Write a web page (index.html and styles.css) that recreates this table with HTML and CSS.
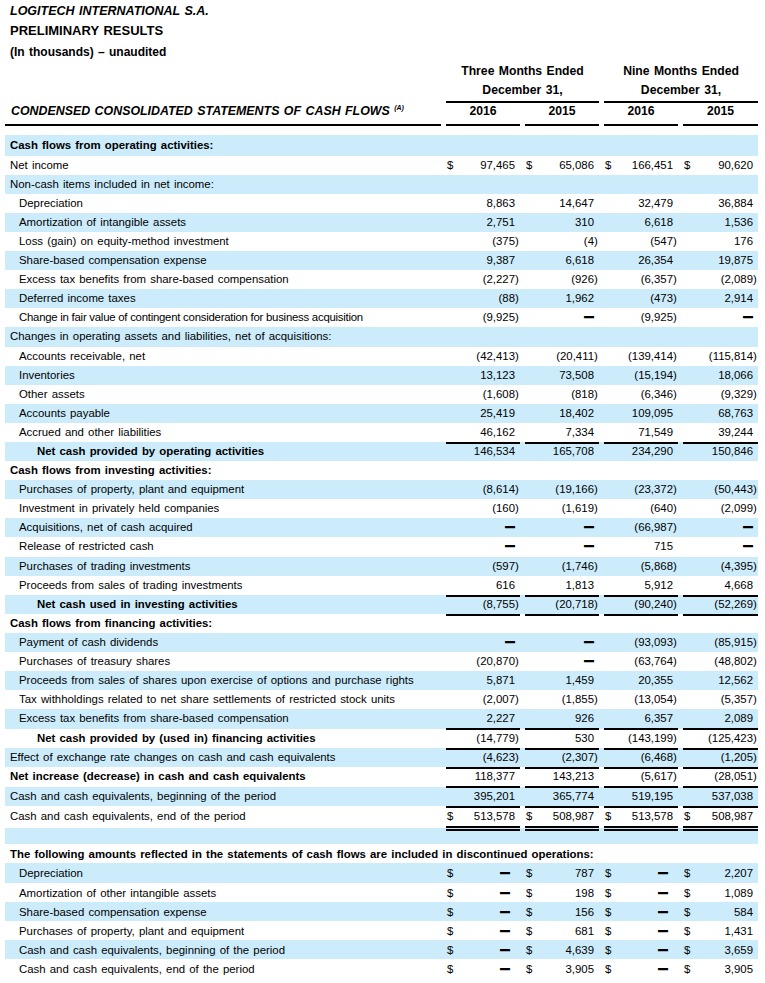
FILE: index.html
```html
<!DOCTYPE html>
<html lang="en">
<head>
<meta charset="utf-8">
<title>Logitech – Condensed Consolidated Statements of Cash Flows</title>
<link rel="stylesheet" href="styles.css">
</head>
<body>
<div class="page">
  <div class="titles">
    <div class="t1">LOGITECH INTERNATIONAL S.A.</div>
    <div class="t2">PRELIMINARY RESULTS</div>
    <div class="t3">(In thousands) – unaudited</div>
  </div>

  <div class="grid hA">
    <div></div>
    <div class="span2">Three Months Ended</div>
    <div class="span2">Nine Months Ended</div>
  </div>
  <div class="grid hB">
    <div></div>
    <div class="span2 u">December 31,</div>
    <div class="span2 u">December 31,</div>
  </div>
  <div class="grid hC">
    <div class="stitle u">CONDENSED CONSOLIDATED STATEMENTS OF CASH FLOWS <sup>(A)</sup></div>
    <div class="yr u">2016</div>
    <div class="yr u">2015</div>
    <div class="yr u">2016</div>
    <div class="yr u">2015</div>
  </div>

  <div class="tbl">
    <div class="grid r first"><div class="l b">Cash flows from operating activities:</div><div></div><div></div><div></div><div></div></div>
    <div class="grid r"><div class="l">Net income</div><div class="c"><span class="d">$</span>97,465</div><div class="c"><span class="d">$</span>65,086</div><div class="c"><span class="d">$</span>166,451</div><div class="c"><span class="d">$</span>90,620</div></div>
    <div class="grid r"><div class="l">Non-cash items included in net income:</div><div></div><div></div><div></div><div></div></div>
    <div class="grid r"><div class="l i1">Depreciation</div><div class="c">8,863</div><div class="c">14,647</div><div class="c">32,479</div><div class="c">36,884</div></div>
    <div class="grid r"><div class="l i1">Amortization of intangible assets</div><div class="c">2,751</div><div class="c">310</div><div class="c">6,618</div><div class="c">1,536</div></div>
    <div class="grid r"><div class="l i1">Loss (gain) on equity-method investment</div><div class="c">(375<span class="p">)</span></div><div class="c">(4<span class="p">)</span></div><div class="c">(547<span class="p">)</span></div><div class="c">176</div></div>
    <div class="grid r"><div class="l i1">Share-based compensation expense</div><div class="c">9,387</div><div class="c">6,618</div><div class="c">26,354</div><div class="c">19,875</div></div>
    <div class="grid r"><div class="l i1">Excess tax benefits from share-based compensation</div><div class="c">(2,227<span class="p">)</span></div><div class="c">(926<span class="p">)</span></div><div class="c">(6,357<span class="p">)</span></div><div class="c">(2,089<span class="p">)</span></div></div>
    <div class="grid r"><div class="l i1">Deferred income taxes</div><div class="c">(88<span class="p">)</span></div><div class="c">1,962</div><div class="c">(473<span class="p">)</span></div><div class="c">2,914</div></div>
    <div class="grid r"><div class="l i1 cond">Change in fair value of contingent consideration for business acquisition</div><div class="c">(9,925<span class="p">)</span></div><div class="c"><span class="z">—</span></div><div class="c">(9,925<span class="p">)</span></div><div class="c"><span class="z">—</span></div></div>
    <div class="grid r"><div class="l">Changes in operating assets and liabilities, net of acquisitions:</div><div></div><div></div><div></div><div></div></div>
    <div class="grid r"><div class="l i1">Accounts receivable, net</div><div class="c">(42,413<span class="p">)</span></div><div class="c">(20,411<span class="p">)</span></div><div class="c">(139,414<span class="p">)</span></div><div class="c">(115,814<span class="p">)</span></div></div>
    <div class="grid r"><div class="l i1">Inventories</div><div class="c">13,123</div><div class="c">73,508</div><div class="c">(15,194<span class="p">)</span></div><div class="c">18,066</div></div>
    <div class="grid r"><div class="l i1">Other assets</div><div class="c">(1,608<span class="p">)</span></div><div class="c">(818<span class="p">)</span></div><div class="c">(6,346<span class="p">)</span></div><div class="c">(9,329<span class="p">)</span></div></div>
    <div class="grid r"><div class="l i1">Accounts payable</div><div class="c">25,419</div><div class="c">18,402</div><div class="c">109,095</div><div class="c">68,763</div></div>
    <div class="grid r"><div class="l i1">Accrued and other liabilities</div><div class="c u">46,162</div><div class="c u">7,334</div><div class="c u">71,549</div><div class="c u">39,244</div></div>
    <div class="grid r"><div class="l i2 b">Net cash provided by operating activities</div><div class="c">146,534</div><div class="c">165,708</div><div class="c">234,290</div><div class="c">150,846</div></div>
    <div class="grid r"><div class="l b">Cash flows from investing activities:</div><div></div><div></div><div></div><div></div></div>
    <div class="grid r"><div class="l i1">Purchases of property, plant and equipment</div><div class="c">(8,614<span class="p">)</span></div><div class="c">(19,166<span class="p">)</span></div><div class="c">(23,372<span class="p">)</span></div><div class="c">(50,443<span class="p">)</span></div></div>
    <div class="grid r"><div class="l i1">Investment in privately held companies</div><div class="c">(160<span class="p">)</span></div><div class="c">(1,619<span class="p">)</span></div><div class="c">(640<span class="p">)</span></div><div class="c">(2,099<span class="p">)</span></div></div>
    <div class="grid r"><div class="l i1">Acquisitions, net of cash acquired</div><div class="c"><span class="z">—</span></div><div class="c"><span class="z">—</span></div><div class="c">(66,987<span class="p">)</span></div><div class="c"><span class="z">—</span></div></div>
    <div class="grid r"><div class="l i1">Release of restricted cash</div><div class="c"><span class="z">—</span></div><div class="c"><span class="z">—</span></div><div class="c">715</div><div class="c"><span class="z">—</span></div></div>
    <div class="grid r"><div class="l i1">Purchases of trading investments</div><div class="c">(597<span class="p">)</span></div><div class="c">(1,746<span class="p">)</span></div><div class="c">(5,868<span class="p">)</span></div><div class="c">(4,395<span class="p">)</span></div></div>
    <div class="grid r"><div class="l i1">Proceeds from sales of trading investments</div><div class="c u">616</div><div class="c u">1,813</div><div class="c u">5,912</div><div class="c u">4,668</div></div>
    <div class="grid r"><div class="l i2 b">Net cash used in investing activities</div><div class="c u">(8,755<span class="p">)</span></div><div class="c u">(20,718<span class="p">)</span></div><div class="c u">(90,240<span class="p">)</span></div><div class="c u">(52,269<span class="p">)</span></div></div>
    <div class="grid r"><div class="l b">Cash flows from financing activities:</div><div></div><div></div><div></div><div></div></div>
    <div class="grid r"><div class="l i1">Payment of cash dividends</div><div class="c"><span class="z">—</span></div><div class="c"><span class="z">—</span></div><div class="c">(93,093<span class="p">)</span></div><div class="c">(85,915<span class="p">)</span></div></div>
    <div class="grid r"><div class="l i1">Purchases of treasury shares</div><div class="c">(20,870<span class="p">)</span></div><div class="c"><span class="z">—</span></div><div class="c">(63,764<span class="p">)</span></div><div class="c">(48,802<span class="p">)</span></div></div>
    <div class="grid r"><div class="l i1">Proceeds from sales of shares upon exercise of options and purchase rights</div><div class="c">5,871</div><div class="c">1,459</div><div class="c">20,355</div><div class="c">12,562</div></div>
    <div class="grid r"><div class="l i1">Tax withholdings related to net share settlements of restricted stock units</div><div class="c">(2,007<span class="p">)</span></div><div class="c">(1,855<span class="p">)</span></div><div class="c">(13,054<span class="p">)</span></div><div class="c">(5,357<span class="p">)</span></div></div>
    <div class="grid r t"><div class="l i1">Excess tax benefits from share-based compensation</div><div class="c u">2,227</div><div class="c u">926</div><div class="c u">6,357</div><div class="c u">2,089</div></div>
    <div class="grid r t"><div class="l i2 b">Net cash provided by (used in) financing activities</div><div class="c u">(14,779<span class="p">)</span></div><div class="c u">530</div><div class="c u">(143,199<span class="p">)</span></div><div class="c u">(125,423<span class="p">)</span></div></div>
    <div class="grid r t"><div class="l">Effect of exchange rate changes on cash and cash equivalents</div><div class="c u">(4,623<span class="p">)</span></div><div class="c u">(2,307<span class="p">)</span></div><div class="c u">(6,468<span class="p">)</span></div><div class="c u">(1,205<span class="p">)</span></div></div>
    <div class="grid r t"><div class="l b">Net increase (decrease) in cash and cash equivalents</div><div class="c u">118,377</div><div class="c u">143,213</div><div class="c u">(5,617<span class="p">)</span></div><div class="c u">(28,051<span class="p">)</span></div></div>
    <div class="grid r t"><div class="l">Cash and cash equivalents, beginning of the period</div><div class="c u">395,201</div><div class="c u">365,774</div><div class="c u">519,195</div><div class="c u">537,038</div></div>
    <div class="grid r end"><div class="l">Cash and cash equivalents, end of the period</div><div class="c uu"><span class="d">$</span>513,578</div><div class="c uu"><span class="d">$</span>508,987</div><div class="c uu"><span class="d">$</span>513,578</div><div class="c uu"><span class="d">$</span>508,987</div></div>
    <div class="grid r blank"><div></div><div></div><div></div><div></div><div></div></div>
    <div class="grid r d2"><div class="l b">The following amounts reflected in the statements of cash flows are included in discontinued operations:</div></div>
    <div class="grid r d2"><div class="l i1">Depreciation</div><div class="c"><span class="d">$</span><span class="z zd">—</span></div><div class="c"><span class="d">$</span>787</div><div class="c"><span class="d">$</span><span class="z zd">—</span></div><div class="c"><span class="d">$</span>2,207</div></div>
    <div class="grid r d2"><div class="l i1">Amortization of other intangible assets</div><div class="c"><span class="d">$</span><span class="z zd">—</span></div><div class="c"><span class="d">$</span>198</div><div class="c"><span class="d">$</span><span class="z zd">—</span></div><div class="c"><span class="d">$</span>1,089</div></div>
    <div class="grid r d2"><div class="l i1">Share-based compensation expense</div><div class="c"><span class="d">$</span><span class="z zd">—</span></div><div class="c"><span class="d">$</span>156</div><div class="c"><span class="d">$</span><span class="z zd">—</span></div><div class="c"><span class="d">$</span>584</div></div>
    <div class="grid r d2"><div class="l i1">Purchases of property, plant and equipment</div><div class="c"><span class="d">$</span><span class="z zd">—</span></div><div class="c"><span class="d">$</span>681</div><div class="c"><span class="d">$</span><span class="z zd">—</span></div><div class="c"><span class="d">$</span>1,431</div></div>
    <div class="grid r d2"><div class="l i1">Cash and cash equivalents, beginning of the period</div><div class="c"><span class="d">$</span><span class="z zd">—</span></div><div class="c"><span class="d">$</span>4,639</div><div class="c"><span class="d">$</span><span class="z zd">—</span></div><div class="c"><span class="d">$</span>3,659</div></div>
    <div class="grid r d2"><div class="l i1">Cash and cash equivalents, end of the period</div><div class="c"><span class="d">$</span><span class="z zd">—</span></div><div class="c"><span class="d">$</span>3,905</div><div class="c"><span class="d">$</span><span class="z zd">—</span></div><div class="c"><span class="d">$</span>3,905</div></div>
  </div>
</div>
</body>
</html>
```

FILE: styles.css
```css
* {
  box-sizing: border-box;
}

body {
  margin: 0;
  background: #ffffff;
  color: #000000;
  font-family: "Liberation Sans", Arial, sans-serif;
  word-spacing: 1px;
}

.page {
  width: 765px;
  padding: 1px 0 0 5px;
}

.titles {
  padding-left: 5px;
  font-weight: bold;
}

.t1 {
  font-size: 12.5px;
  font-style: italic;
  line-height: 20px;
}

.t2 {
  font-size: 13px;
  line-height: 20px;
}

.t3 {
  font-size: 12px;
  line-height: 22px;
}

.grid {
  display: grid;
  grid-template-columns: 436px 74px 74px 74px 75px;
  column-gap: 5px;
  width: 753px;
}

.hA,
.hB,
.hC {
  font-size: 12.2px;
  font-weight: bold;
}

.hA {
  height: 17.4px;
  line-height: 17.4px;
}

.hB {
  height: 19.1px;
  line-height: 21px;
}

.hC {
  height: 19px;
  line-height: 25px;
}

.span2 {
  grid-column: span 2;
  text-align: center;
}

.u {
  border-bottom: 2px solid #000000;
}

.stitle {
  font-size: 12.4px;
  font-style: italic;
  padding-left: 6px;
  white-space: nowrap;
}

.stitle sup {
  font-size: 7px;
  vertical-align: 5px;
  line-height: 0;
}

.yr {
  text-align: center;
}

.tbl {
  margin-top: 16.5px;
}

.r {
  height: 19.1px;
  line-height: 19px;
  font-size: 11.4px;
}

.tbl > .r:nth-child(odd) {
  background: #ccecfc;
}

.r.first {
  height: 20.6px;
  padding-top: 1.5px;
}

.r.t {
  height: 19.4px;
}

.r.end {
  height: 22px;
  padding-top: 1px;
}

.r.blank {
  height: 16px;
}

.r.d2 {
  height: 19.2px;
  padding-top: 1px;
}

.l {
  padding-left: 5px;
  white-space: nowrap;
}

.i1 {
  padding-left: 14px;
}

.i2 {
  padding-left: 32px;
}

.cond {
  word-spacing: 0;
  letter-spacing: -0.25px;
}

.b {
  font-weight: bold;
}

.c {
  display: flex;
  justify-content: flex-end;
  padding: 0 5px 0 1px;
  white-space: nowrap;
}

.c .d {
  margin-right: auto;
}

.c.uu {
  border-bottom: 5px double #000000;
  margin-bottom: 2px;
}

.p {
  margin-right: -0.333em;
}

.z {
  font-size: 10px;
  font-weight: bold;
  line-height: 17px;
  text-shadow: 0 0.8px 0 #000000;
}

.zd {
  margin-right: 5px;
}
```
